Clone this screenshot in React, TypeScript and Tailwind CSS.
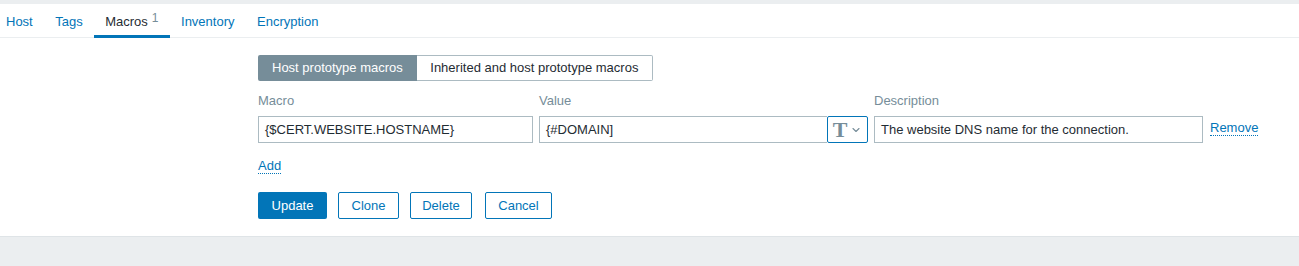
import { ChevronDown } from "lucide-react";

const font = { fontFamily: '"Liberation Sans", Arial, sans-serif' };

const tabs = [
  { label: "Host" },
  { label: "Tags" },
  { label: "Macros", count: 1, active: true },
  { label: "Inventory" },
  { label: "Encryption" },
];

function Tabs() {
  return (
    <div className="flex h-[34px] border-b border-[#ebeef0] -ml-[5px]">
      {tabs.map((t) => (
        <div
          key={t.label}
          className={
            "flex items-center pl-[11px] pr-[11.5px] border-b-[3px] -mb-px pt-[5px] " +
            (t.active ? "border-[#0275b8] text-[#1f2c33]" : "border-transparent text-[#0275b8]")
          }
        >
          {t.label}
          {t.count && <sup className="ml-[4px] text-[#768d99] text-[12px] -top-[4px]">{t.count}</sup>}
        </div>
      ))}
    </div>
  );
}

function Input({ value, className }: { value: string; className: string }) {
  return (
    <div
      className={
        "h-[27px] border border-[#acbbc2] bg-white flex items-center px-[6px] text-[#1f2c33] " + className
      }
    >
      {value}
    </div>
  );
}

function LinkText({ children }: { children: React.ReactNode }) {
  return (
    <span className="text-[#0275b8] border-b border-dotted border-[#0275b8] leading-[15px]">
      {children}
    </span>
  );
}

export default function App() {
  return (
    <div className="w-[1299px] h-[266px] bg-[#ebeef0] text-[13px] flex flex-col" style={font}>
      <div className="h-[4px]" />
      <div className="bg-white border-b border-[#dfe4e7] h-[233px]">
        <Tabs />
        <div className="pl-[258px] pt-[17px]">
          <div className="flex h-[26px] w-fit">
            <div className="bg-[#768d99] text-white px-[14px] flex items-center rounded-l-[2px]">
              Host prototype macros
            </div>
            <div className="border border-[#acbbc2] border-l-0 text-[#1f2c33] px-[13.5px] flex items-center rounded-r-[2px]">
              Inherited and host prototype macros
            </div>
          </div>

          <div className="flex mt-[11px] h-[18px] items-center text-[#768d99]">
            <div className="w-[281px]">Macro</div>
            <div className="w-[335px]">Value</div>
            <div>Description</div>
          </div>

          <div className="flex items-center mt-[6px]">
            <Input value="{$CERT.WEBSITE.HOSTNAME}" className="w-[275px]" />
            <Input value="{#DOMAIN]" className="w-[288px] ml-[6px] border-r-0" />
            <div className="h-[27px] w-[41px] border border-[#0275b8] rounded-[2px] flex items-center justify-center gap-[3px] text-[#768d99]">
              <span className="text-[22px] leading-none font-bold" style={{ fontFamily: '"Liberation Serif", serif' }}>
                T
              </span>
              <ChevronDown size={12} strokeWidth={2.2} />
            </div>
            <Input value="The website DNS name for the connection." className="w-[329px] ml-[6px]" />
            <div className="ml-[7px] -mt-[3px]">
              <LinkText>Remove</LinkText>
            </div>
          </div>

          <div className="mt-[13px] h-[17px]">
            <LinkText>Add</LinkText>
          </div>

          <div className="flex gap-[11px] mt-[19px]">
            <button className="h-[27px] w-[69px] bg-[#0275b8] text-white rounded-[2px]">Update</button>
            <button className="h-[27px] w-[61px] border border-[#0275b8] text-[#0275b8] rounded-[2px]">Clone</button>
            <button className="h-[27px] w-[62px] border border-[#0275b8] text-[#0275b8] rounded-[2px]">Delete</button>
            <button className="h-[27px] w-[67px] border border-[#0275b8] text-[#0275b8] rounded-[2px] ml-[2px]">Cancel</button>
          </div>
        </div>
      </div>
    </div>
  );
}
